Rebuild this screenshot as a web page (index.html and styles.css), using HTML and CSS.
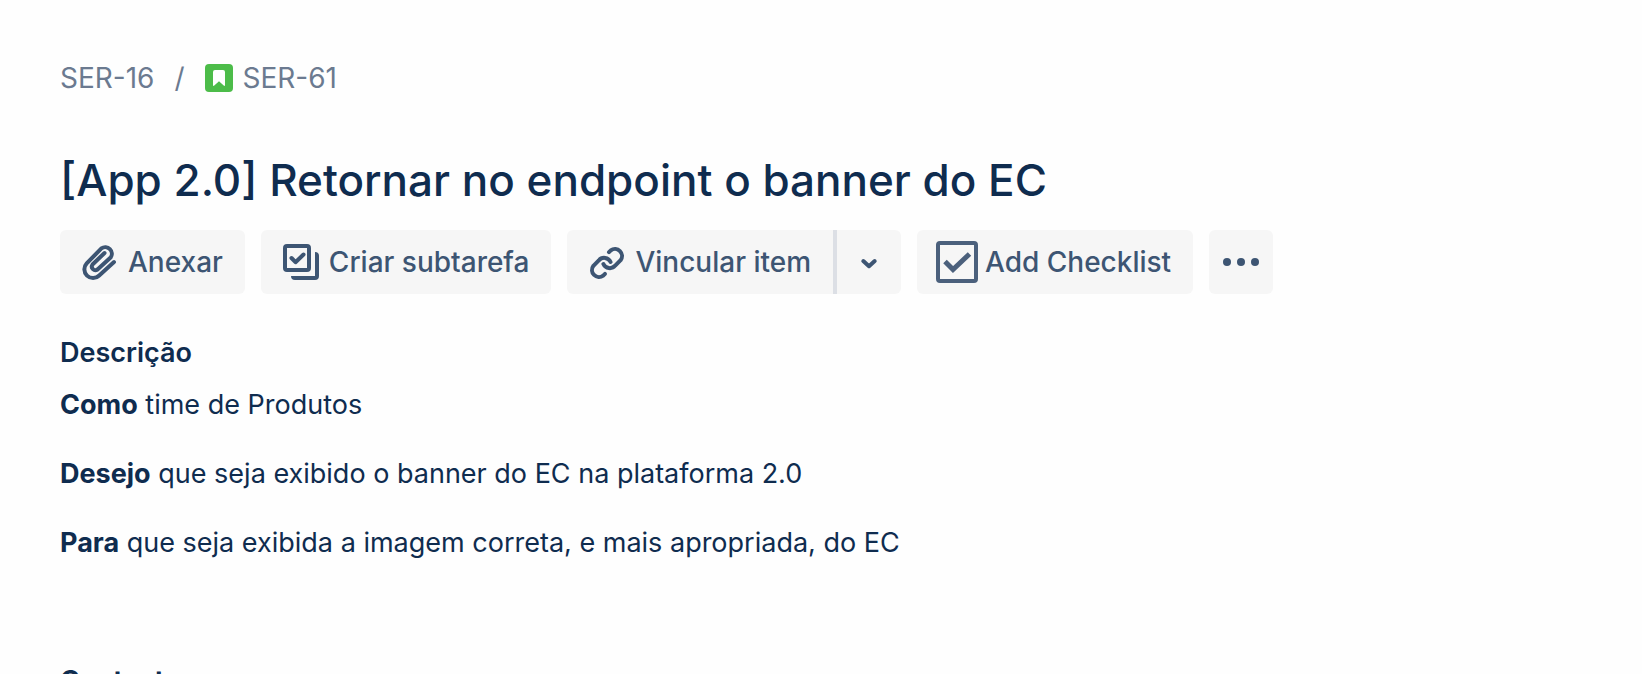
FILE: index.html
```html
<!DOCTYPE html>
<html lang="pt-BR">
<head>
<meta charset="utf-8">
<title>[App 2.0] Retornar no endpoint o banner do EC</title>
<link rel="stylesheet" href="styles.css">
</head>
<body>
<main class="issue">
  <nav class="breadcrumbs" aria-label="Navegação">
    <a class="crumb" href="#ser-16">SER-16</a>
    <span class="separator">/</span>
    <a class="crumb" href="#ser-61">
      <svg class="story-icon" viewBox="0 0 28 28" aria-hidden="true">
        <rect width="28" height="28" rx="4" fill="#4cbc49"/>
        <path d="M8 21V8a2 2 0 0 1 2-2h8a2 2 0 0 1 2 2v13q0 1.5-1.3.6L14 17.300l-4.700 4.300Q8 22.500 8 21z" fill="#fff"/>
      </svg>
      SER-61
    </a>
  </nav>

  <h1 class="title">[App 2.0] Retornar no endpoint o banner do EC</h1>

  <div class="toolbar">
    <button class="button" type="button">
      <svg class="icon" viewBox="0 0 48 48" aria-hidden="true">
        <path class="line" d="M38 24 23.200 37.500A8.700 8.700 0 0 1 10.700 25.400L25.400 10.400A6.600 6.600 0 0 1 34.600 19.600L21.500 31.500A3.600 3.600 0 0 1 16.500 26.500L28.500 15"/>
      </svg>
      Anexar
    </button>
    <button class="button" type="button">
      <svg class="icon" viewBox="0 0 48 48" aria-hidden="true">
        <rect class="line" x="8" y="8" width="24" height="24" rx="2"/>
        <path class="line" d="m14.500 20 4 4.200 8-7.700"/>
        <path fill="currentColor" d="M38 14a4 4 0 0 1 4 4v20a4 4 0 0 1-4 4H18a4 4 0 0 1-4-4h24z"/>
      </svg>
      Criar subtarefa
    </button>
    <div class="split">
      <button class="button split-main" type="button">
        <svg class="icon" viewBox="0 0 48 48" aria-hidden="true">
          <path class="line" d="M26 14.200 27.800 12.400A7 7 0 0 1 37.600 22.200L32.200 27.600A7 7 0 0 1 20.400 26"/>
          <path class="line" transform="rotate(180 24 25)" d="M26 14.200 27.800 12.400A7 7 0 0 1 37.600 22.200L32.200 27.600A7 7 0 0 1 20.400 26"/>
        </svg>
        Vincular item
      </button>
      <button class="button square split-more" type="button" aria-label="Mais opções de vínculo">
        <svg class="icon" viewBox="0 0 48 48" aria-hidden="true">
          <path class="line" d="m18.300 23 5.700 5.200 5.700-5.200"/>
        </svg>
      </button>
    </div>
    <button class="button" type="button">
      <svg class="icon checklist-icon" viewBox="0 0 48 48" aria-hidden="true">
        <rect x="5" y="5" width="38" height="38" rx="2" fill="none" stroke="currentColor" stroke-width="4"/>
        <path d="m12 23.500 8 8L36.500 16" fill="none" stroke="currentColor" stroke-width="5"/>
      </svg>
      Add Checklist
    </button>
    <button class="button square" type="button" aria-label="Mais ações">
      <svg class="icon" viewBox="0 0 48 48" fill="currentColor" aria-hidden="true">
        <circle cx="10" cy="24" r="4"/><circle cx="24" cy="24" r="4"/><circle cx="38" cy="24" r="4"/>
      </svg>
    </button>
  </div>

  <section class="description">
    <h2 class="heading">Descrição</h2>
    <p><strong>Como</strong> time de Produtos</p>
    <p><strong>Desejo</strong> que seja exibido o banner do EC na plataforma 2.0</p>
    <p><strong>Para</strong> que seja exibida a imagem correta, e mais apropriada, do EC</p>
    <p><br></p>
    <p><strong>Contexto</strong></p>
  </section>
</main>
</body>
</html>
```
FILE: styles.css
```css
body {
  margin: 0;
  background: #fefefe;
  color: #0f2c4f;
  font-family: Inter, "Liberation Sans", sans-serif;
  font-size: 27px;
  line-height: 45px;
}

.issue {
  padding: 56px 60px 0;
}

.breadcrumbs {
  display: flex;
  align-items: center;
  gap: 20px;
  color: #6b7a90;
  font-size: 28px;
  line-height: 44px;
}

.crumb {
  display: flex;
  align-items: center;
  gap: 10px;
  color: inherit;
  text-decoration: none;
}

.story-icon {
  width: 28px;
  height: 28px;
}

.title {
  margin: 52px 0 22px;
  font-size: 44px;
  font-weight: 500;
  line-height: 56px;
}

.toolbar {
  display: flex;
  flex-wrap: wrap;
  gap: 16px;
}

.button {
  display: flex;
  align-items: center;
  gap: 4px;
  height: 64px;
  padding: 0 22px 0 16px;
  border: 0;
  border-radius: 6px;
  background: #f6f6f6;
  color: #3d5573;
  font: inherit;
  font-size: 28px;
  font-weight: 500;
  white-space: nowrap;
}

.square {
  justify-content: center;
  width: 64px;
  padding: 0;
}

.split {
  display: flex;
}

.split-main {
  border-right: 4px solid #dcdfe5;
  border-radius: 6px 0 0 6px;
}

.split-more {
  border-radius: 0 6px 6px 0;
}

.icon {
  flex: none;
  width: 48px;
  height: 48px;
}

.line {
  fill: none;
  stroke: currentColor;
  stroke-width: 4;
  stroke-linecap: round;
  stroke-linejoin: round;
}

.checklist-icon {
  color: #4b607c;
}

.description {
  padding-top: 36px;
}

.heading {
  margin: 0 0 7px;
  font-size: inherit;
  font-weight: 600;
}

.description p {
  margin: 0 0 24px;
}
```
